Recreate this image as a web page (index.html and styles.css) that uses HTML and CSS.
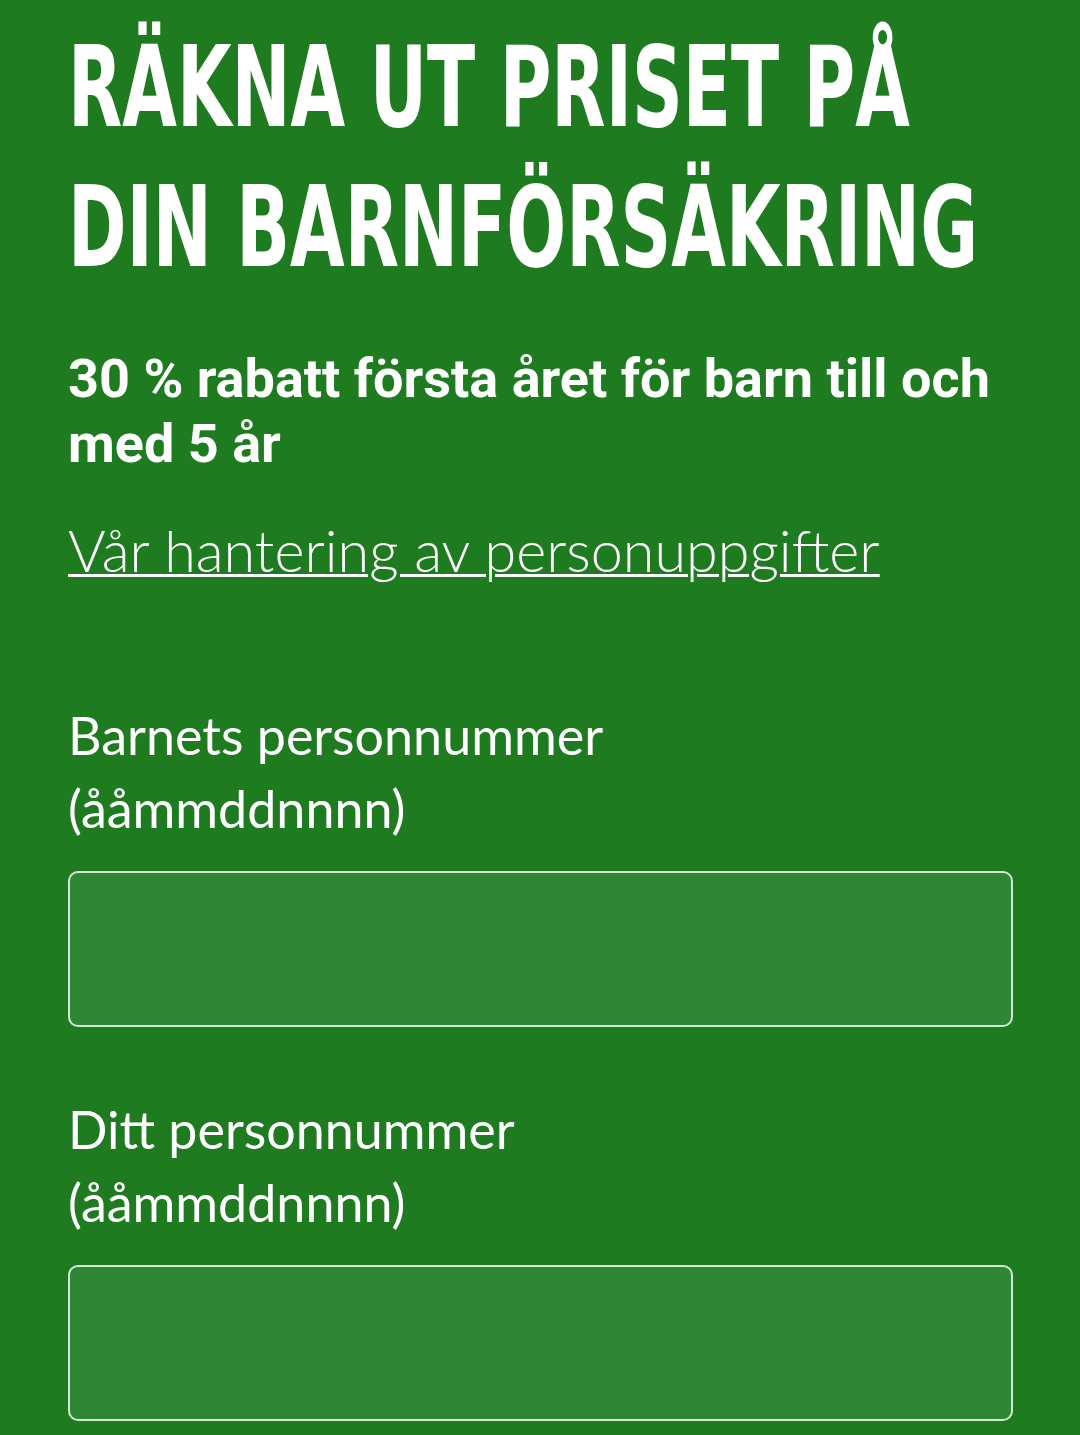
FILE: index.html
```html
<!DOCTYPE html>
<html lang="sv">
<head>
<meta charset="utf-8">
<link rel="stylesheet" href="styles.css">
</head>
<body>
<main class="page">
  <h1 class="title">
    <span class="title-line">RÄKNA UT PRISET PÅ</span>
    <span class="title-line">DIN BARNFÖRSÄKRING</span>
  </h1>
  <p class="lead">30 % rabatt första året för barn till och med 5 år</p>
  <p class="privacy"><a class="privacy-link" href="#">Vår hantering av personuppgifter</a></p>
  <form class="form">
    <div class="field">
      <label class="label" for="child">Barnets personnummer <span class="hint">(ååmmddnnnn)</span></label>
      <input class="input" id="child" type="text">
    </div>
    <div class="field">
      <label class="label" for="own">Ditt personnummer <span class="hint">(ååmmddnnnn)</span></label>
      <input class="input" id="own" type="text">
    </div>
  </form>
</main>
</body>
</html>
```
FILE: styles.css
```css
html, body {
  margin: 0;
  padding: 0;
  background: #1e7b20;
}
.page {
  padding: 17px 67px 0 68px;
  color: #fff;
  font-family: Lato, "Open Sans", sans-serif;
}
.title {
  margin: 0;
  font-family: "DejaVu Sans Condensed", "DejaVu Sans", sans-serif;
  font-weight: bold;
  font-size: 112px;
  line-height: 140px;
}
.title-line {
  display: block;
  white-space: nowrap;
  transform: scaleX(0.70);
  transform-origin: left center;
}
.lead {
  margin: 49px 0 0;
  font-family: Roboto, sans-serif;
  font-weight: bold;
  font-size: 54px;
  line-height: 65px;
}
.privacy {
  margin: 39px 0 0;
  font-weight: 300;
  font-size: 57.5px;
  line-height: 70px;
}
.privacy-link {
  color: #fff;
  text-decoration: underline;
  text-decoration-thickness: 3px;
}
.form {
  margin-top: 114px;
}
.field {
  margin-bottom: 66px;
}
.label {
  display: block;
  font-size: 52px;
  line-height: 73px;
  margin-bottom: 26px;
}
.hint {
  display: block;
}
.input {
  display: block;
  box-sizing: border-box;
  width: 100%;
  height: 156px;
  margin: 0;
  background: #2e8732;
  border: 2px solid #d6e6d6;
  border-radius: 10px;
}
```
